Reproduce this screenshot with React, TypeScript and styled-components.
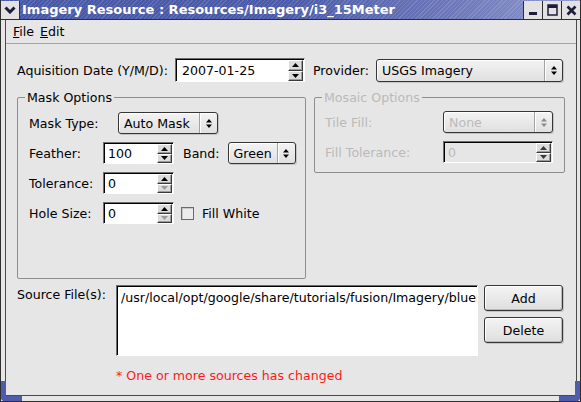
import React from "react";
import styled, { createGlobalStyle } from "styled-components";

const FONT = `"DejaVu Sans", "Bitstream Vera Sans", Verdana, sans-serif`;
const SIZE = "12.6px";

const GlobalStyle = createGlobalStyle`
  html, body { margin: 0; padding: 0; }
  body { font-family: ${FONT}; font-size: ${SIZE}; color: #000; background: #e6e6e6; }
  * { box-sizing: border-box; }
`;

const Window = styled.div`
  position: relative;
  width: 581px;
  height: 402px;
  display: flex;
  flex-direction: column;
  background: #e6e6e6;
  border: 1px solid #2e2e2e;
  border-top: none;
  overflow: hidden;
`;

const TitleBar = styled.div`
  flex: none;
  height: 20px;
  display: flex;
  align-items: stretch;
  border-bottom: 1px solid #2e2e2e;
  background:
    repeating-linear-gradient(135deg, rgba(255, 255, 255, 0.13) 0 1px, transparent 1px 3px),
    linear-gradient(to right, #4858a8 0%, #4b5ba9 50%, #6f7abb 80%, #8f98cc 100%);
`;

const TitleButton = styled.div<{ $side: "left" | "right" }>`
  flex: none;
  width: 19px;
  margin-top: 1px;
  display: flex;
  align-items: center;
  justify-content: center;
  background: #e2e2e2;
  ${(p) => (p.$side === "left" ? "border-right: 1px solid #2e2e2e;" : "border-left: 1px solid #2e2e2e;")}
`;

const TitleText = styled.div`
  flex: 1;
  padding-left: 2px;
  display: flex;
  align-items: center;
  color: #fff;
  font-weight: bold;
  font-size: 13px;
  white-space: nowrap;
  overflow: hidden;
`;

const FrameBody = styled.div`
  flex: 1;
  display: flex;
  padding: 0 4px 5px 4px;
  background: #e6e6e6;
`;

const Client = styled.div`
  flex: 1;
  display: flex;
  flex-direction: column;
  border: 1px solid #4a4a4a;
  border-top: none;
  background: #e6e6e6;
`;

const Corner = styled.div<{ $side: "left" | "right" }>`
  position: absolute;
  bottom: 0;
  ${(p) => (p.$side === "left" ? "left: 0;" : "right: 0;")}
  width: 21px;
  height: 20px;
  border-bottom: 5px solid #4f5cab;
  ${(p) =>
    p.$side === "left"
      ? "border-left: 5px solid #4f5cab; border-bottom-left-radius: 4px;"
      : "border-right: 5px solid #4f5cab; border-bottom-right-radius: 4px;"}
`;

const MenuBar = styled.div`
  flex: none;
  height: 24px;
  display: flex;
  align-items: center;
  padding-left: 4px;
  border-bottom: 1px solid #a4a4a4;
`;

const MenuItem = styled.span`
  padding: 0 3px;
  line-height: 15px;
`;

const Form = styled.div`
  flex: 1;
  display: flex;
  flex-direction: column;
  padding: 14px 11px 0 11px;
`;

const Row = styled.div<{ $h?: number }>`
  display: flex;
  align-items: center;
  height: ${(p) => p.$h ?? 22}px;
`;

const Label = styled.span<{ $w?: number; $ml?: number; $disabled?: boolean }>`
  flex: none;
  width: ${(p) => (p.$w ? `${p.$w}px` : "auto")};
  margin-left: ${(p) => p.$ml ?? 0}px;
  color: ${(p) => (p.$disabled ? "#bababa" : "#000")};
  white-space: nowrap;
  line-height: 15px;
`;

const GroupRow = styled.div`
  display: flex;
  align-items: flex-start;
  gap: 8px;
  margin-top: 8px;
`;

const Group = styled.fieldset<{ $w: number }>`
  flex: none;
  width: ${(p) => p.$w}px;
  margin: 0;
  padding: 0;
  border: 1px solid #8e8e8e;
  border-radius: 2px;
  min-width: 0;
`;

const Legend = styled.legend<{ $disabled?: boolean }>`
  margin-left: 7px;
  padding: 0 2px;
  line-height: 15px;
  color: ${(p) => (p.$disabled ? "#bababa" : "#000")};
`;

const GroupBody = styled.div<{ $pt: number; $pb: number; $pl: number }>`
  display: flex;
  flex-direction: column;
  gap: 8px;
  padding: ${(p) => p.$pt}px 0 ${(p) => p.$pb}px ${(p) => p.$pl}px;
`;

const SpinFrame = styled.div<{ $w: number; $h: number; $disabled?: boolean }>`
  flex: none;
  width: ${(p) => p.$w}px;
  height: ${(p) => p.$h}px;
  display: flex;
  align-items: stretch;
  background: ${(p) => (p.$disabled ? "#e6e6e6" : "#fff")};
  border-top: 1px solid #6e6e6e;
  border-left: 1px solid #6e6e6e;
  border-right: 1px solid #fff;
  border-bottom: 1px solid #fff;
  box-shadow: inset 1px 1px 0 #000;
`;

const SpinText = styled.div<{ $disabled?: boolean; $pad: number }>`
  flex: 1;
  display: flex;
  align-items: center;
  padding-left: ${(p) => p.$pad}px;
  padding-top: 1px;
  color: ${(p) => (p.$disabled ? "#bababa" : "#000")};
  white-space: nowrap;
  overflow: hidden;
`;

const SpinButtons = styled.div`
  flex: none;
  width: 16px;
  display: flex;
  flex-direction: column;
  padding: 1px 1px 0 0;
`;

const SpinButton = styled.div`
  flex: 1;
  display: flex;
  align-items: center;
  justify-content: center;
  background: #dcdcdc;
  border-top: 1px solid #fff;
  border-left: 1px solid #fff;
  border-right: 1px solid #3a3a3a;
  border-bottom: 1px solid #3a3a3a;
  box-shadow: inset -1px -1px 0 #9c9c9c;
`;

const ComboFrame = styled.div<{ $w: number; $h: number }>`
  flex: none;
  width: ${(p) => p.$w}px;
  height: ${(p) => p.$h}px;
  display: flex;
  align-items: stretch;
  border: 1px solid #363636;
  border-radius: 3px;
  background: linear-gradient(#f3f3f3, #e0e0e0);
  box-shadow: inset 1px 1px 0 #fff, 1px 1px 0 #c4c4c4;
`;

const ComboText = styled.div<{ $disabled?: boolean }>`
  flex: 1;
  display: flex;
  align-items: center;
  padding-left: 5px;
  color: ${(p) => (p.$disabled ? "#bababa" : "#000")};
  white-space: nowrap;
  overflow: hidden;
`;

const ComboArrow = styled.div`
  flex: none;
  width: 18px;
  display: flex;
  align-items: center;
  justify-content: center;
  border-left: 1px solid #a2a2a2;
  box-shadow: inset 1px 0 0 #fff;
`;

const CheckBox = styled.div`
  flex: none;
  width: 13px;
  height: 13px;
  margin-left: 7px;
  border: 1px solid #6a6a6a;
  background: #ececec;
  box-shadow: inset 1px 1px 0 #c8c8c8;
`;

const SourceRow = styled.div`
  display: flex;
  align-items: flex-start;
  margin-top: 6px;
`;

const SourceLabel = styled(Label)`
  padding-top: 2px;
`;

const ListBox = styled.div`
  flex: none;
  width: 362px;
  height: 71px;
  padding: 4px 0 0 4px;
  background: #fff;
  border-top: 1px solid #6e6e6e;
  border-left: 1px solid #6e6e6e;
  border-right: 1px solid #fff;
  border-bottom: 1px solid #fff;
  box-shadow: inset 1px 1px 0 #000;
  overflow: hidden;
`;

const ListItem = styled.div`
  width: 100%;
  white-space: nowrap;
  overflow: hidden;
  line-height: 15px;
`;

const ButtonColumn = styled.div`
  flex: none;
  display: flex;
  flex-direction: column;
  gap: 6px;
  margin-left: 6px;
`;

const PushButton = styled.button`
  width: 79px;
  height: 26px;
  padding: 0;
  font-family: ${FONT};
  font-size: ${SIZE};
  color: #000;
  border: 1px solid #363636;
  border-radius: 3px;
  background: linear-gradient(#f4f4f4, #dedede);
  box-shadow: inset 1px 1px 0 #fff, inset -1px -1px 0 #bcbcbc, 1px 1px 0 #c4c4c4;
`;

const Warning = styled.div`
  margin-top: 12px;
  padding-left: 99px;
  color: #ff1a1a;
  line-height: 15px;
`;

function Tri({ up, color }: { up?: boolean; color: string }) {
  return (
    <svg width="7" height="4" viewBox="0 0 7 4">
      <polygon points={up ? "0,4 3.5,0 7,4" : "0,0 3.5,4 7,0"} fill={color} />
    </svg>
  );
}

function UpDown({ color }: { color: string }) {
  return (
    <svg width="6" height="9" viewBox="0 0 6 9">
      <polygon points="0,3.5 3,0 6,3.5" fill={color} />
      <polygon points="0,5.5 3,9 6,5.5" fill={color} />
    </svg>
  );
}

function SpinBox({
  value,
  width,
  height = 22,
  disabled,
  downDim,
  pad = 4,
}: {
  value: string;
  width: number;
  height?: number;
  disabled?: boolean;
  downDim?: boolean;
  pad?: number;
}) {
  return (
    <SpinFrame $w={width} $h={height} $disabled={disabled}>
      <SpinText $disabled={disabled} $pad={pad}>
        {value}
      </SpinText>
      <SpinButtons>
        <SpinButton>
          <Tri up color={disabled ? "#3a3a3a" : "#000"} />
        </SpinButton>
        <SpinButton>
          <Tri color={downDim ? "#9a9a9a" : disabled ? "#3a3a3a" : "#000"} />
        </SpinButton>
      </SpinButtons>
    </SpinFrame>
  );
}

function Combo({
  value,
  width,
  height = 22,
  disabled,
}: {
  value: string;
  width: number;
  height?: number;
  disabled?: boolean;
}) {
  return (
    <ComboFrame $w={width} $h={height}>
      <ComboText $disabled={disabled}>{value}</ComboText>
      <ComboArrow>
        <UpDown color={disabled ? "#8a8a8a" : "#000"} />
      </ComboArrow>
    </ComboFrame>
  );
}

export default function App() {
  return (
    <>
      <GlobalStyle />
      <Window>
        <TitleBar>
          <TitleButton $side="left">
            <svg width="12" height="8" viewBox="0 0 12 8">
              <polyline points="1.5,1.5 6,6 10.5,1.5" fill="none" stroke="#1c1c3c" strokeWidth="3" />
            </svg>
          </TitleButton>
          <TitleText>Imagery Resource : Resources/Imagery/i3_15Meter</TitleText>
          <TitleButton $side="right">
            <svg width="10" height="12" viewBox="0 0 10 12">
              <rect x="1" y="8" width="8" height="3" fill="#1c1c3c" />
            </svg>
          </TitleButton>
          <TitleButton $side="right">
            <svg width="11" height="12" viewBox="0 0 11 12">
              <rect x="1" y="1" width="9" height="10" fill="none" stroke="#1c1c3c" strokeWidth="1.5" />
              <rect x="1" y="1" width="9" height="3" fill="#1c1c3c" />
            </svg>
          </TitleButton>
          <TitleButton $side="right">
            <svg width="11" height="11" viewBox="0 0 11 11">
              <path d="M1.5 1.5 L9.5 9.5 M9.5 1.5 L1.5 9.5" stroke="#1c1c3c" strokeWidth="2.6" />
            </svg>
          </TitleButton>
        </TitleBar>
        <FrameBody>
          <Client>
            <MenuBar>
              <MenuItem>
                <u>F</u>ile
              </MenuItem>
              <MenuItem>
                <u>E</u>dit
              </MenuItem>
            </MenuBar>
            <Form>
              <Row $h={24}>
                <Label $w={158}>Aquisition Date (Y/M/D):</Label>
                <SpinBox value="2007-01-25" width={130} height={24} pad={6} />
                <Label $w={63} $ml={8}>
                  Provider:
                </Label>
                <Combo value="USGS Imagery" width={187} height={23} />
              </Row>

              <GroupRow>
                <Group $w={289}>
                  <Legend>Mask Options</Legend>
                  <GroupBody $pt={7} $pb={54} $pl={11}>
                    <Row>
                      <Label $w={74}>Mask Type:</Label>
                      <Label $w={15} />
                      <Combo value="Auto Mask" width={100} />
                    </Row>
                    <Row>
                      <Label $w={74}>Feather:</Label>
                      <SpinBox value="100" width={71} />
                      <Label $ml={9}>Band:</Label>
                      <Label $w={8} />
                      <Combo value="Green" width={68} />
                    </Row>
                    <Row>
                      <Label $w={74}>Tolerance:</Label>
                      <SpinBox value="0" width={71} downDim />
                    </Row>
                    <Row>
                      <Label $w={74}>Hole Size:</Label>
                      <SpinBox value="0" width={71} downDim />
                      <CheckBox />
                      <Label $ml={8}>Fill White</Label>
                    </Row>
                  </GroupBody>
                </Group>

                <Group $w={251}>
                  <Legend $disabled>Mosaic Options</Legend>
                  <GroupBody $pt={6} $pb={9} $pl={10}>
                    <Row>
                      <Label $w={118} $disabled>
                        Tile Fill:
                      </Label>
                      <Combo value="None" width={110} disabled />
                    </Row>
                    <Row>
                      <Label $w={118} $disabled>
                        Fill Tolerance:
                      </Label>
                      <SpinBox value="0" width={110} disabled />
                    </Row>
                  </GroupBody>
                </Group>
              </GroupRow>

              <SourceRow>
                <SourceLabel $w={99}>Source File(s):</SourceLabel>
                <ListBox>
                  <ListItem>/usr/local/opt/google/share/tutorials/fusion/Imagery/bluemarble_4km.tif</ListItem>
                </ListBox>
                <ButtonColumn>
                  <PushButton>Add</PushButton>
                  <PushButton>Delete</PushButton>
                </ButtonColumn>
              </SourceRow>

              <Warning>* One or more sources has changed</Warning>
            </Form>
          </Client>
        </FrameBody>
        <Corner $side="left" />
        <Corner $side="right" />
      </Window>
    </>
  );
}
